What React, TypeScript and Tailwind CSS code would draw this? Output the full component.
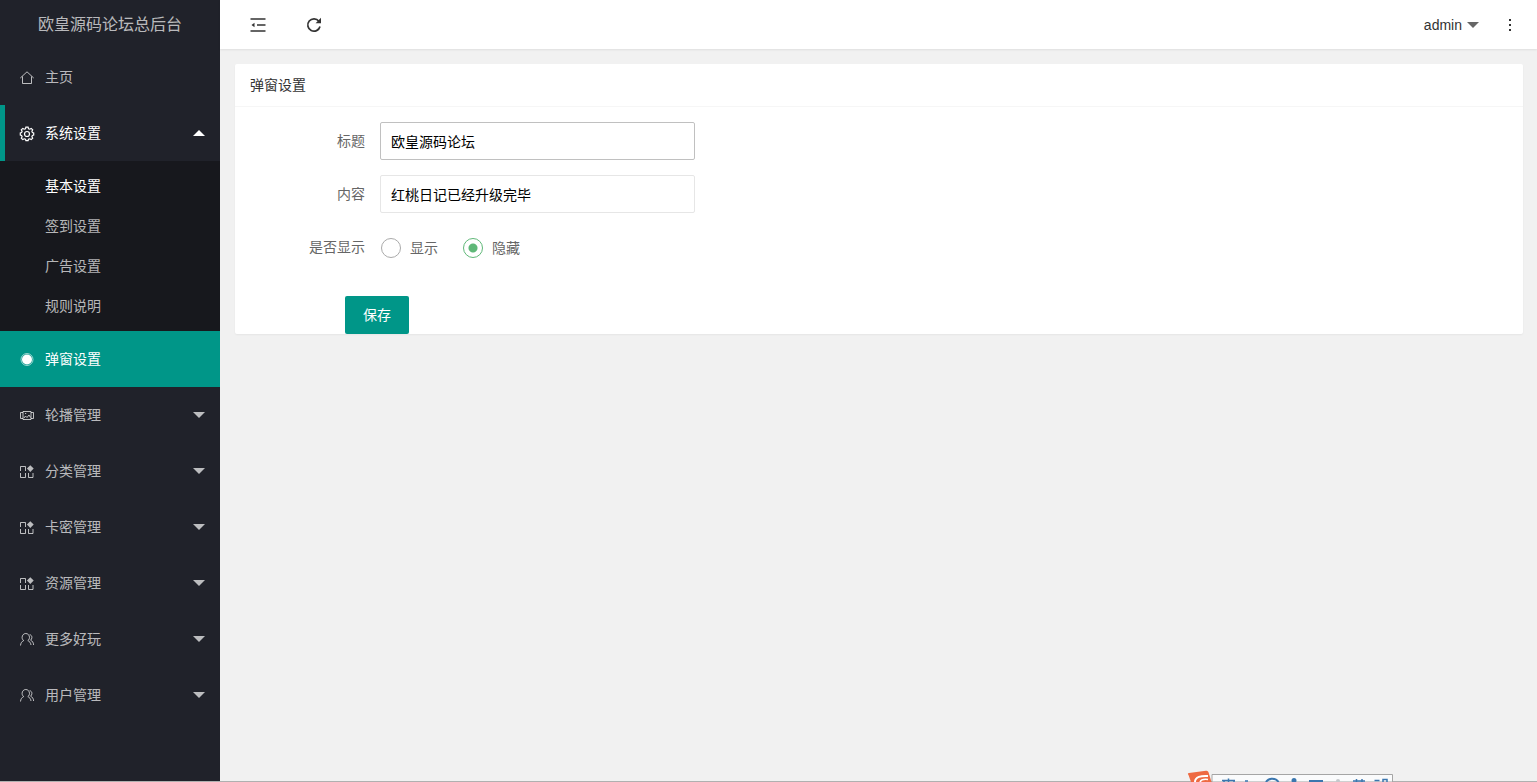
import { useState } from "react";
import type { ReactNode } from "react";
import clsx from "clsx";

type IconName = "home" | "gear" | "dot" | "carousel" | "app" | "user";

type MenuItem = {
  label: string;
  icon: IconName;
  children?: string[];
};

const MENU: MenuItem[] = [
  { label: "主页", icon: "home" },
  { label: "系统设置", icon: "gear", children: ["基本设置", "签到设置", "广告设置", "规则说明"] },
  { label: "弹窗设置", icon: "dot" },
  { label: "轮播管理", icon: "carousel", children: [] },
  { label: "分类管理", icon: "app", children: [] },
  { label: "卡密管理", icon: "app", children: [] },
  { label: "资源管理", icon: "app", children: [] },
  { label: "更多好玩", icon: "user", children: [] },
  { label: "用户管理", icon: "user", children: [] },
];

const ICONS: Record<IconName, ReactNode> = {
  home: <path d="M.3 8 7 1.800 13.700 8M2.500 6.500v7h9v-7" />,
  gear: (
    <>
      <path
        d="M5.900 1.200h2.200l.4 1.500 1.300.5 1.400-.8 1.500 1.500-.8 1.400.5 1.200 1.300.4v2.200l-1.300.4-.5 1.200.8 1.400-1.500 1.500-1.400-.8-1.300.5-.4 1.300H5.900l-.4-1.300-1.300-.5-1.400.8-1.500-1.500.8-1.400-.5-1.200-1.300-.4V6.900l1.300-.4.5-1.200-.8-1.400 1.500-1.500 1.400.8 1.300-.5z"
        strokeWidth="1.200"
      />
      <circle cx="7" cy="8" r="2.500" strokeWidth="1.200" />
    </>
  ),
  dot: (
    <>
      <circle cx="7" cy="7.500" r="6" strokeOpacity=".6" />
      <circle cx="7" cy="7.500" r="5" fill="currentColor" stroke="none" />
    </>
  ),
  carousel: (
    <>
      <path d="M3 3.500h8v8H3zM3 4.500H.5v6H3M11 4.500h2.500v6H11" />
      <path d="m4 10 1.500-2L7 9.500 9 7l1.500 2.500M5 5.500h1.200" />
    </>
  ),
  app: (
    <>
      <path d="M.5 7V2.500h5V7M.5 9v4.500h5V9M8.500 9v4.500h4.500V9" />
      <path d="m10.300 1.200 3.400 3.400-3.400 3.400-3.400-3.400z" fill="currentColor" stroke="none" />
    </>
  ),
  user: (
    <>
      <path d="M.5 13.500c.2-2.600 1.500-4.200 3.200-4.900C2.600 7.800 2.100 6.700 2.100 5.400c0-2.200 1.600-3.900 3.700-3.900s3.700 1.700 3.700 3.900c0 1.300-.6 2.400-1.700 3.200 1.700.7 2.900 2.100 3.200 4.400" />
      <path d="M9.700 2.600c1.300.3 2.200 1.400 2.200 2.800 0 1.200-.5 2.200-1.300 2.800 1.700.8 2.900 2.300 3 4.800" />
    </>
  ),
};

function MenuIcon({ name }: { name: IconName }) {
  return (
    <svg viewBox="0 0 14 14" className="size-3.5 overflow-visible" fill="none" stroke="currentColor" aria-hidden="true">
      {ICONS[name]}
    </svg>
  );
}

function Caret({ up = false }: { up?: boolean }) {
  return (
    <svg viewBox="0 0 12 6" className="h-1.5 w-3" fill="currentColor" aria-hidden="true">
      <path d={up ? "M0 6 6 0l6 6z" : "M0 0h12L6 6z"} />
    </svg>
  );
}

function Sidebar() {
  const [open, setOpen] = useState("系统设置");

  return (
    <aside className="w-[220px] shrink-0 bg-[#20222a] text-white/70">
      <h1 className="h-[49px] text-center text-base leading-[49px]">欧皇源码论坛总后台</h1>
      <nav>
        {MENU.map((item) => {
          const expanded = item.label === open;
          const selected = item.label === "弹窗设置";
          return (
            <div key={item.label}>
              <button
                type="button"
                onClick={() => item.children && setOpen(expanded ? "" : item.label)}
                className={clsx(
                  "flex h-14 w-full items-center border-l-[5px] px-[15px] text-left",
                  expanded && "border-[#009688] text-white",
                  selected && "border-[#009688] bg-[#009688] text-white",
                  !expanded && !selected && "border-transparent",
                )}
              >
                <MenuIcon name={item.icon} />
                <span className="flex-1 pl-[11px]">{item.label}</span>
                {item.children && <Caret up={expanded} />}
              </button>
              {expanded && item.children && item.children.length > 0 && (
                <ul className="bg-[#17181d] py-[5px]">
                  {item.children.map((child, i) => (
                    <li key={child}>
                      <a href="#" className={clsx("block h-10 pl-[45px] leading-10", i === 0 && "text-white")}>
                        {child}
                      </a>
                    </li>
                  ))}
                </ul>
              )}
            </div>
          );
        })}
      </nav>
    </aside>
  );
}

function TopBar() {
  return (
    <header className="flex h-[49px] items-center bg-white text-[#333] shadow-[0_1px_2px_rgba(0,0,0,0.08)]">
      <button type="button" aria-label="侧边伸缩" className="flex w-14 justify-center pl-5">
        <svg viewBox="0 0 16 14" className="h-3.5 w-4 shrink-0" fill="none" stroke="currentColor" strokeWidth="1.700">
          <path d="M.5 1h15M7 7h8.500M.5 13h15" />
          <path d="M4.500 4.800v4.400L1.500 7z" fill="currentColor" stroke="none" />
        </svg>
      </button>
      <button type="button" aria-label="刷新" className="flex w-14 justify-center pl-5">
        <svg viewBox="0 0 16 16" className="size-4 shrink-0" fill="none" stroke="currentColor" strokeWidth="1.700">
          <path d="M12.900 4.200A6.200 6.200 0 1 0 14 9.500" />
          <path d="M15 .8v5.400H9.600z" fill="currentColor" stroke="none" />
        </svg>
      </button>
      <div className="ml-auto flex items-center">
        <button type="button" className="flex items-center gap-[5px]">
          admin
          <span className="text-[#666]">
            <Caret />
          </span>
        </button>
        <button type="button" aria-label="更多" className="flex w-[58px] justify-center pl-1">
          <svg viewBox="0 0 4 14" className="h-3.5 w-1" fill="currentColor">
            <path d="M1 1h2v2H1zM1 6h2v2H1zM1 11h2v2H1z" />
          </svg>
        </button>
      </div>
    </header>
  );
}

function TextField({ id, label, value, active = false }: { id: string; label: string; value: string; active?: boolean }) {
  return (
    <div className="mb-[15px] flex items-center">
      <label htmlFor={id} className="w-[130px] pr-[15px] text-right text-[#666]">
        {label}
      </label>
      <input
        id={id}
        type="text"
        defaultValue={value}
        className={clsx(
          "h-[38px] w-[315px] rounded-[2px] border bg-white px-2.5 text-black outline-none",
          active ? "border-[#c0c0c0]" : "border-[#e6e6e6]",
        )}
      />
    </div>
  );
}

function PopupForm() {
  const [visible, setVisible] = useState("隐藏");

  return (
    <section className="mt-[15px] mr-3.5 ml-[15px] rounded-[2px] bg-white shadow-[0_1px_2px_rgba(0,0,0,0.05)]">
      <h2 className="h-[43px] border-b border-[#f6f6f6] px-[15px] leading-[42px] text-[#333]">弹窗设置</h2>
      <form className="pt-[15px] pl-[15px]" onSubmit={(e) => e.preventDefault()}>
        <TextField id="title" label="标题" value="欧皇源码论坛" active />
        <TextField id="content" label="内容" value="红桃日记已经升级完毕" />
        <div role="radiogroup" aria-labelledby="visible-label" className="flex h-[38px] items-center text-[#666]">
          <span id="visible-label" className="w-[130px] pr-[15px] text-right">
            是否显示
          </span>
          {["显示", "隐藏"].map((option) => (
            <label key={option} className="mr-6 flex items-center gap-[9px] pt-px pl-px">
              <input
                type="radio"
                name="visible"
                value={option}
                checked={visible === option}
                onChange={() => setVisible(option)}
                className="size-5 appearance-none rounded-full border border-[#aaa] bg-white checked:border-[#5fb878] checked:bg-[radial-gradient(circle,#5fb878_4px,transparent_5px)]"
              />
              {option}
            </label>
          ))}
        </div>
        <button type="submit" className="mt-[30px] ml-[95px] block h-[38px] w-16 rounded-[2px] bg-[#009688] text-white">
          保存
        </button>
      </form>
    </section>
  );
}

// Input method bar docked at the screen edge, only its top is visible
function InputMethodBar() {
  return (
    <svg viewBox="0 0 208 12" className="absolute right-[143px] bottom-0 h-3 w-52" fill="none" aria-hidden="true">
      <path d="M26 4.500h180.500V12H26z" fill="#fafbfc" stroke="#a5a5a5" />
      <path d="M2.500 5Q1 3.500 3 3L20 .8q2-.3 2.500 1.500L25.500 12H5z" fill="#ee6a42" />
      <path d="M9 12c0-5 6-6.500 13-6" stroke="#fff" strokeWidth="2" />
      <path d="M14 12c1-2.500 4-3 8-2.500" stroke="#fff" strokeWidth="1.500" />
      <g stroke="#3b76ae" strokeWidth="1.500">
        <path d="M36 10.500h13M42.500 8.500v3.500M38 12v-1M48 12v-1M59 11h3" />
        <path d="M80 12c2.500-4.500 10-4.500 12.500 0" strokeWidth="2" />
        <path d="M123 11h14" strokeWidth="2" />
        <path d="M167 11h12M170.500 9v3M176 9v3M188.500 10.500h5M197 12v-2.500h4V12" />
      </g>
      <circle cx="108" cy="10.500" r="2.500" fill="#3b76ae" />
      <circle cx="152" cy="11" r="2" fill="#c4c8cc" />
    </svg>
  );
}

export default function App() {
  return (
    <div className="relative flex min-h-screen flex-col overflow-hidden bg-[#f1f1f1] font-['Liberation_Sans','Noto_Sans_CJK_SC',sans-serif] text-sm">
      <div className="flex flex-1">
        <Sidebar />
        <main className="min-w-0 flex-1">
          <TopBar />
          <PopupForm />
        </main>
      </div>
      <div className="h-px bg-[#b0b0b0]" />
      <InputMethodBar />
    </div>
  );
}
